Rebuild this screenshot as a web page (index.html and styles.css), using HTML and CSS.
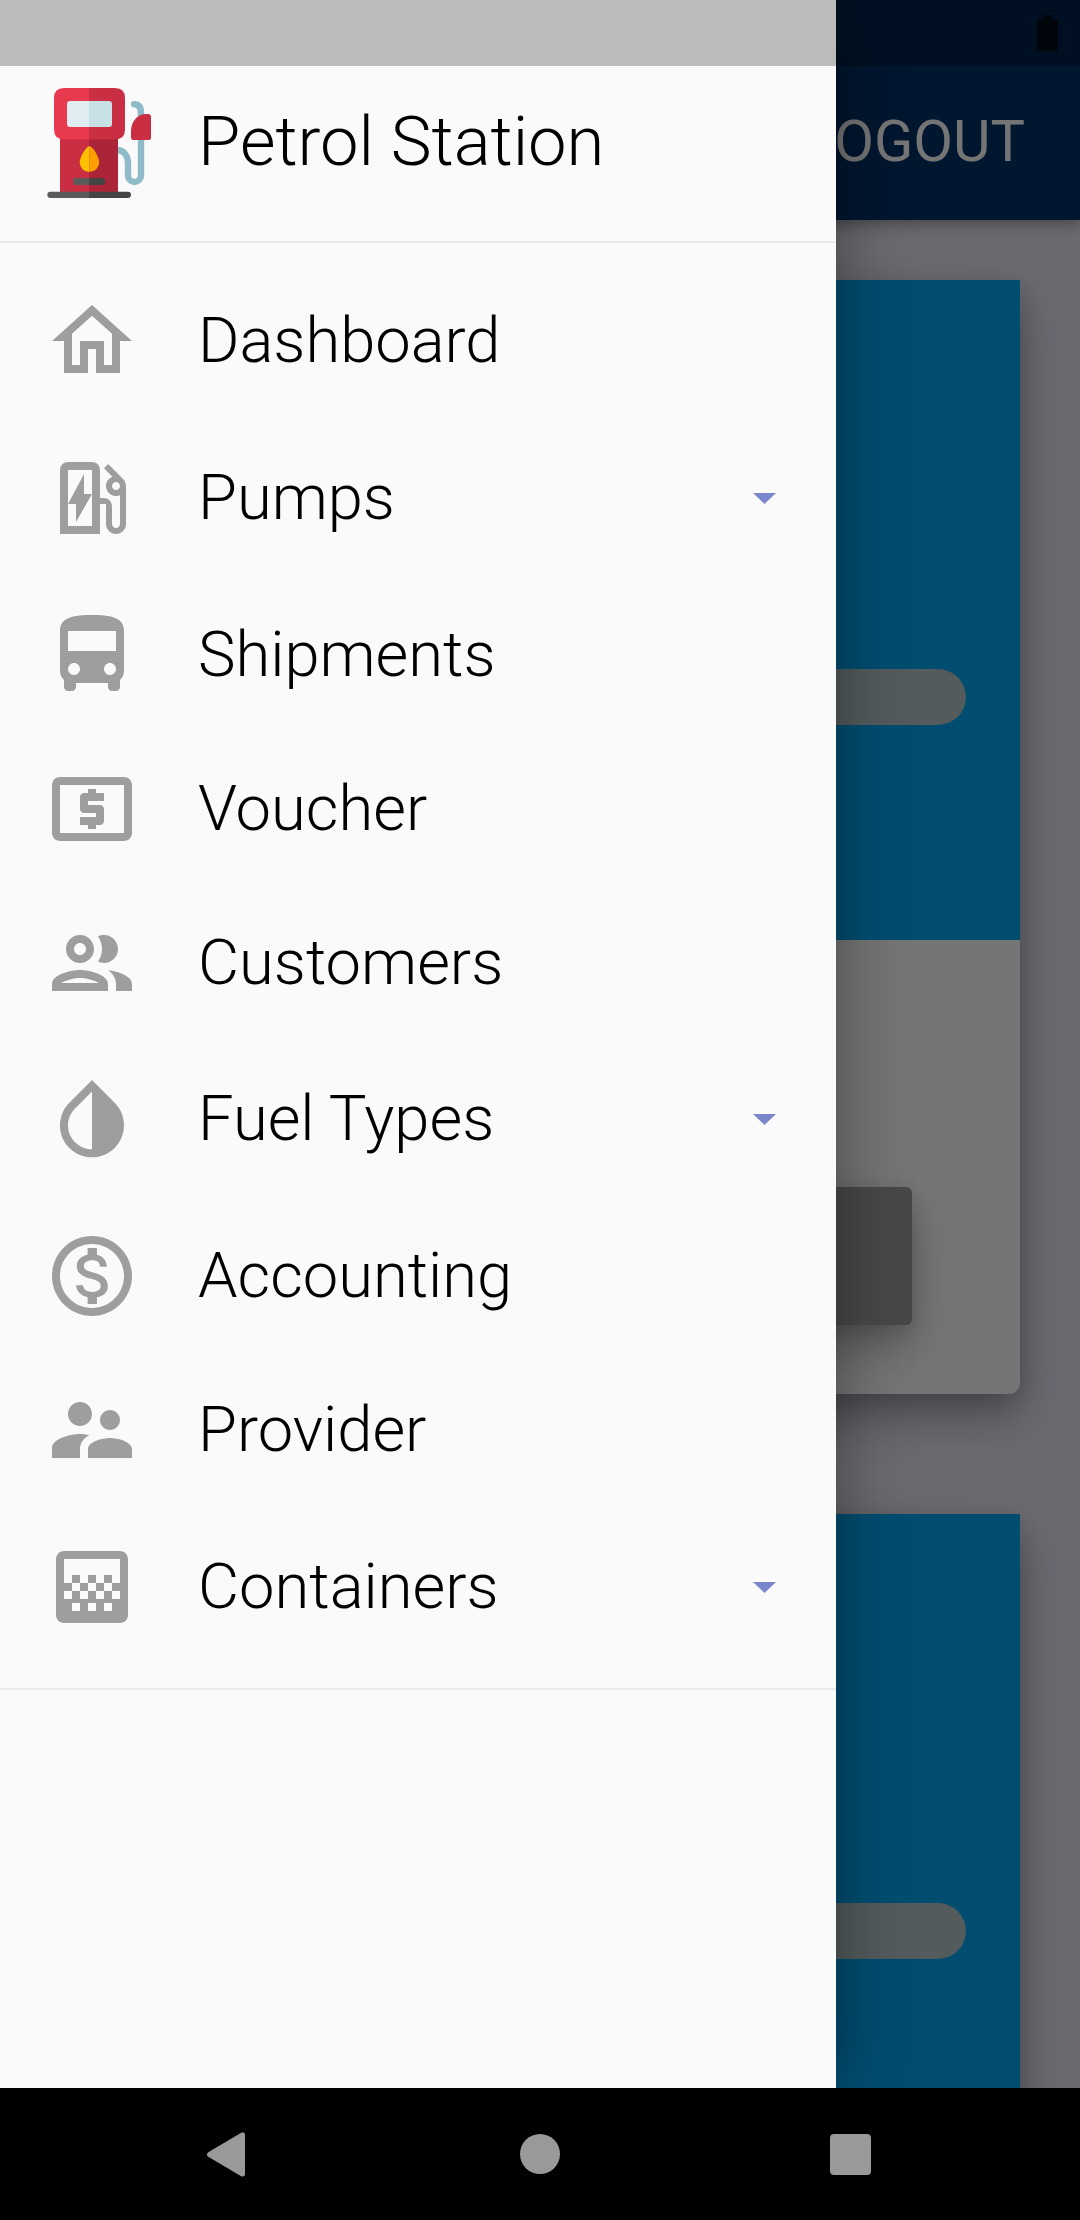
FILE: index.html
```html
<!DOCTYPE html>
<html lang="en">
<head>
<meta charset="utf-8">
<title>Petrol Station</title>
<link rel="stylesheet" href="styles.css">
</head>
<body>
<div class="screen">
  <div class="app">
    <header class="appbar"><span class="logout">LOGOUT</span></header>
    <main class="cards">
      <section class="card">
        <div class="card-top"><div class="track"></div></div>
        <div class="card-body"><div class="card-button"></div></div>
      </section>
      <section class="card">
        <div class="card-top"><div class="track"></div></div>
        <div class="card-body"><div class="card-button"></div></div>
      </section>
    </main>
    <div class="scrim"></div>
    <aside class="drawer">
      <div class="drawer-header">
        <svg class="logo" viewBox="47 87 105 112">
          <path d="M117 150C124 150 128 156 128 163V175.500a6.500 6.500 0 0 0 13 0V113Q141 104.200 134.200 104.200" fill="none" stroke="#8fbac7" stroke-width="6.400" stroke-linecap="round"/>
          <path d="M131 131C131 121 138 114 146 114H148Q151 114 151 117V137.500Q151 140 148.500 140H133.500Q131 140 131 137.500Z" fill="#ca2e43"/>
          <path d="M60 136H89V193H60Z" fill="#ca2e43"/>
          <path d="M89 136H118V193H89Z" fill="#ab2438"/>
          <path d="M89 88H64Q54 88 54 98V129Q54 139.500 64 139.500H89Z" fill="#e8394f"/>
          <path d="M89 88H115Q125 88 125 98V129Q125 139.500 115 139.500H89Z" fill="#ca2e43"/>
          <path d="M89 101H70Q67 101 67 104V124Q67 127 70 127H89Z" fill="#dfecf1"/>
          <path d="M89 101H109Q112 101 112 104V124Q112 127 109 127H89Z" fill="#c8e1e6"/>
          <path d="M89.500 146C87 146 79.700 156 79.700 162.500A9.700 9.700 0 0 0 89.400 172Z" fill="#ffc000"/>
          <path d="M89.300 146C92 146 99.200 156 99.200 162.500A9.700 9.700 0 0 1 89.300 172Z" fill="#ff9f00"/>
          <path d="M89 178H76.500a3.500 3.500 0 0 0 0 7H89Z" fill="#5b5b5b"/>
          <path d="M89 178h12.800a3.500 3.500 0 0 1 0 7H89Z" fill="#444"/>
          <path d="M89 191.700H50.400a3.100 3.100 0 0 0 0 6.200H89Z" fill="#5b5b5b"/>
          <path d="M89 191.700h38.900a3.100 3.100 0 0 1 0 6.200H89Z" fill="#444"/>
        </svg>
        <span class="title">Petrol Station</span>
      </div>
      <nav class="menu">
        <a class="item"><svg class="icon" viewBox="0 0 24 24"><path d="M12 5.690l5 4.500V18h-2v-6H9v6H7v-7.810l5-4.500M12 3L2 12h3v8h6v-6h2v6h6v-8h3L12 3z"/></svg><span class="label">Dashboard</span></a>
        <a class="item expandable"><svg class="icon" viewBox="0 0 24 24"><path fill-rule="evenodd" d="M19.770 7.230l.010-.010-3.720-3.720L15 4.560l2.110 2.110c-.940.360-1.610 1.260-1.610 2.330 0 1.380 1.120 2.500 2.500 2.500.360 0 .690-.080 1-.210v7.210c0 .550-.450 1-1 1s-1-.450-1-1V14c0-1.100-.900-2-2-2h-1V5c0-1.100-.900-2-2-2H6c-1.100 0-2 .900-2 2v16h10v-7.500h1.500v5c0 1.380 1.120 2.500 2.500 2.500s2.500-1.120 2.500-2.500V9c0-.690-.280-1.320-.730-1.770zM18 10c-.550 0-1-.450-1-1s.450-1 1-1 1 .450 1 1-.450 1-1 1zM12 19H6V5h6v14z"/><path d="M8 18v-4.500H6L10 6v5h2z"/></svg><span class="label">Pumps</span><svg class="caret" viewBox="0 0 23 11"><path d="M0 0h23L11.500 11z"/></svg></a>
        <a class="item"><svg class="icon" viewBox="0 0 24 24"><path d="M4 16c0 .88.39 1.67 1 2.22V20c0 .55.45 1 1 1h1c.55 0 1-.45 1-1v-1h8v1c0 .55.45 1 1 1h1c.55 0 1-.45 1-1v-1.78c.61-.55 1-1.34 1-2.22V6c0-3.500-3.580-4-8-4s-8 .5-8 4v10zm3.500 1c-.83 0-1.500-.67-1.500-1.500S6.670 14 7.500 14s1.500.67 1.500 1.500S8.330 17 7.500 17zm9 0c-.83 0-1.500-.67-1.500-1.500s.67-1.500 1.500-1.500 1.500.67 1.500 1.500-.67 1.500-1.500 1.500zm1.500-6H6V6h12v5z"/></svg><span class="label">Shipments</span></a>
        <a class="item"><svg class="icon" viewBox="0 0 24 24"><path d="M11 17h2v-1h1c.55 0 1-.45 1-1v-3c0-.55-.45-1-1-1h-3v-1h4V8h-2V7h-2v1h-1c-.55 0-1 .45-1 1v3c0 .55.45 1 1 1h3v1H9v2h2v1zm9-13H4c-1.110 0-1.990.89-1.990 2L2 18c0 1.110.89 2 2 2h16c1.110 0 2-.89 2-2V6c0-1.110-.89-2-2-2zm0 14H4V6h16v12z"/></svg><span class="label">Voucher</span></a>
        <a class="item"><svg class="icon" viewBox="0 0 24 24"><path d="M9 13.750c-2.340 0-7 1.170-7 3.500V19h14v-1.750c0-2.330-4.660-3.500-7-3.500zM4.340 17c.84-.58 2.870-1.250 4.660-1.250s3.820.67 4.660 1.250H4.340zM9 12c1.930 0 3.500-1.570 3.500-3.500S10.930 5 9 5 5.500 6.570 5.500 8.500 7.070 12 9 12zm0-5c.83 0 1.500.67 1.500 1.500S9.830 10 9 10s-1.500-.67-1.500-1.500S8.170 7 9 7zm7.040 6.810c1.160.84 1.960 1.960 1.960 3.440V19h4v-1.750c0-2.020-3.500-3.170-5.960-3.440zM15 12c1.930 0 3.500-1.570 3.500-3.500S16.930 5 15 5c-.54 0-1.040.13-1.500.35.63.89 1 1.980 1 3.150s-.37 2.260-1 3.150c.46.22.96.35 1.500.35z"/></svg><span class="label">Customers</span></a>
        <a class="item expandable"><svg class="icon" viewBox="0 0 24 24"><path d="M17.660 7.930L12 2.270 6.340 7.930c-3.120 3.120-3.120 8.190 0 11.310C7.900 20.800 9.950 21.580 12 21.580s4.100-.78 5.660-2.340c3.120-3.120 3.120-8.190 0-11.310zM12 19.590c-1.600 0-3.110-.62-4.240-1.760C6.620 16.690 6 15.190 6 13.590s.62-3.110 1.760-4.240L12 5.100v14.490z"/></svg><span class="label">Fuel Types</span><svg class="caret" viewBox="0 0 23 11"><path d="M0 0h23L11.500 11z"/></svg></a>
        <a class="item"><svg class="icon" viewBox="0 0 24 24"><path d="M12 2C6.480 2 2 6.480 2 12s4.480 10 10 10 10-4.480 10-10S17.520 2 12 2zm0 18c-4.410 0-8-3.590-8-8s3.590-8 8-8 8 3.590 8 8-3.590 8-8 8zm.31-8.860c-1.770-.45-2.340-.94-2.340-1.670 0-.84.79-1.430 2.100-1.430 1.380 0 1.900.66 1.940 1.640h1.710c-.05-1.340-.87-2.570-2.490-2.970V5H10.900v1.690c-1.510.32-2.720 1.300-2.720 2.810 0 1.790 1.490 2.690 3.660 3.210 1.950.46 2.340 1.150 2.340 1.870 0 .53-.39 1.390-2.100 1.390-1.600 0-2.230-.72-2.320-1.640H8.040c.1 1.700 1.360 2.660 2.860 2.970V19h2.340v-1.670c1.520-.29 2.720-1.160 2.730-2.770-.01-2.200-1.900-2.960-3.660-3.420z"/></svg><span class="label">Accounting</span></a>
        <a class="item"><svg class="icon" viewBox="0 0 24 24"><path d="M16.500 12c1.380 0 2.490-1.120 2.490-2.500S17.880 7 16.500 7C15.120 7 14 8.120 14 9.500s1.120 2.500 2.500 2.500zM9 11c1.660 0 2.990-1.340 2.990-3S10.660 5 9 5C7.340 5 6 6.340 6 8s1.340 3 3 3zm7.500 3c-1.830 0-5.500.92-5.500 2.750V19h11v-2.250c0-1.830-3.670-2.750-5.500-2.750zM9 13c-2.330 0-7 1.170-7 3.500V19h7v-2.250c0-.85.33-2.340 2.370-3.470C10.500 13.100 9.660 13 9 13z"/></svg><span class="label">Provider</span></a>
        <a class="item expandable"><svg class="icon" viewBox="0 0 24 24"><path d="M11 9h2v2h-2zm-2 2h2v2H9zm4 0h2v2h-2zm2-2h2v2h-2zM7 9h2v2H7zm12-6H5c-1.100 0-2 .9-2 2v14c0 1.100.9 2 2 2h14c1.100 0 2-.9 2-2V5c0-1.100-.9-2-2-2zM9 18H7v-2h2v2zm4 0h-2v-2h2v2zm4 0h-2v-2h2v2zm2-7h-2v2h2v2h-2v-2h-2v2h-2v-2h-2v2H9v-2H7v2H5v-2h2v-2H5V5h14v6z"/></svg><span class="label">Containers</span><svg class="caret" viewBox="0 0 23 11"><path d="M0 0h23L11.500 11z"/></svg></a>
      </nav>
    </aside>
    <div class="statusbar">
      <svg class="battery" viewBox="0 0 21 36"><path d="M6 0h9v4h4q2 0 2 2v28q0 2-2 2H2q-2 0-2-2V6q0-2 2-2h4z"/></svg>
    </div>
  </div>
  <footer class="navbar">
    <svg class="nav-icon" viewBox="0 0 46 46"><path d="M3.500 23.500L36.500 3.900V43.100Z" stroke="#999" stroke-width="5" stroke-linejoin="round"/></svg>
    <svg class="nav-icon" viewBox="0 0 46 46"><circle cx="23" cy="23" r="20"/></svg>
    <svg class="nav-icon" viewBox="0 0 46 46"><rect x="2" y="3" width="41" height="41" rx="4"/></svg>
  </footer>
</div>
</body>
</html>
```
FILE: styles.css
```css
* { box-sizing: border-box; }

body {
  margin: 0;
  font-family: Roboto, "Liberation Sans", sans-serif;
}

.screen {
  display: flex;
  flex-direction: column;
  width: 1080px;
  height: 2220px;
  overflow: hidden;
  background: #000;
}

/* Page behind the drawer */
.app {
  position: relative;
  height: 2088px;
  overflow: hidden;
  background: #e6e6f3;
}

.appbar {
  position: relative;
  z-index: 1;
  display: flex;
  align-items: center;
  justify-content: flex-end;
  height: 220px;
  padding: 66px 55px 4px 0;
  background: #043066;
  box-shadow: 0 4px 14px rgba(0, 0, 0, .35);
}

.logout {
  font-size: 57.75px;
  line-height: 68px;
  color: #fff;
}

.cards {
  display: flex;
  flex-direction: column;
  gap: 120px;
  padding: 60px 60px 0;
}

.card {
  flex: none;
  height: 1114px;
  border-radius: 0 0 11px 11px;
  background: #fff;
  box-shadow: 0 22px 44px rgba(0, 0, 0, .3), 0 6px 22px rgba(0, 0, 0, .12);
}

.card-top {
  height: 660px;
  padding: 389px 54px 0;
  background: #03a9f4;
}

.track {
  height: 56px;
  border-radius: 28px;
  background: #b5c6c9;
}

.card-body { padding: 247px 108px 0; }

.card-button {
  height: 138px;
  border-radius: 6px;
  background: #9e9e9e;
  box-shadow: 0 22px 44px rgba(0, 0, 0, .25), 0 6px 22px rgba(0, 0, 0, .12);
}

.scrim {
  position: absolute;
  inset: 0;
  z-index: 2;
  background: rgba(0, 0, 0, .54);
}

/* Drawer */
.drawer {
  position: absolute;
  inset: 0 auto 0 0;
  z-index: 3;
  width: 836px;
  background: #fafafa;
  box-shadow: 0 0 66px rgba(0, 0, 0, .4);
}

.drawer-header {
  display: flex;
  align-items: flex-start;
  gap: 46px;
  height: 243px;
  padding: 87px 0 0 47px;
  border-bottom: 2px solid #ebebeb;
}

.logo {
  width: 105px;
  height: 112px;
}

.title {
  margin-top: 15px;
  font-size: 68.75px;
  font-weight: 300;
  line-height: 80px;
  color: #000;
}

.menu {
  padding: 21px 0;
  border-bottom: 2px solid #ebebeb;
}

.item {
  display: flex;
  align-items: center;
  height: 154px;
  padding: 0 60px 0 44px;
}

.item.expandable { height: 159.667px; }

.icon {
  width: 96px;
  height: 96px;
  margin-right: 58px;
  fill: #9e9e9e;
}

.label {
  padding-bottom: 2px;
  font-size: 63.25px;
  font-weight: 300;
  line-height: 74px;
  color: #000;
}

.caret {
  width: 23px;
  height: 11px;
  margin: 1px 0 0 auto;
  fill: #7986cb;
}

/* System bars */
.statusbar {
  position: absolute;
  inset: 0 0 auto;
  z-index: 4;
  display: flex;
  align-items: center;
  justify-content: flex-end;
  height: 66px;
  padding-right: 22px;
  background: rgba(0, 0, 0, .25);
}

.battery {
  width: 21px;
  height: 36px;
  fill: rgba(0, 0, 0, .65);
}

.navbar {
  display: flex;
  align-items: center;
  justify-content: center;
  gap: 265px;
  height: 132px;
}

.nav-icon {
  width: 46px;
  height: 46px;
  fill: #999;
}
```
